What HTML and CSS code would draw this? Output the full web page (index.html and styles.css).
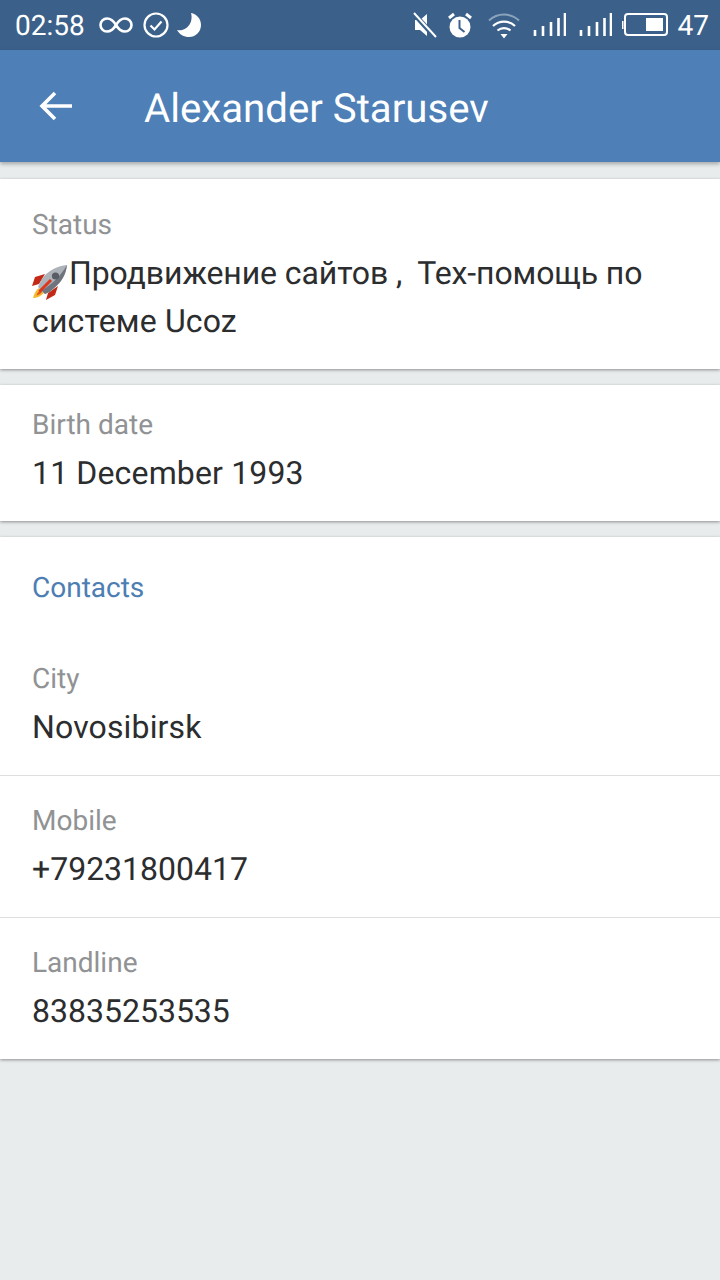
FILE: index.html
```html
<!DOCTYPE html>
<html lang="en">
<head>
<meta charset="utf-8">
<title>Alexander Starusev</title>
<link rel="stylesheet" href="styles.css">
</head>
<body>
<div class="statusbar">
  <div class="sb-left">
    <span class="time">02:58</span>
    <svg class="ic-inf" width="34" height="20" viewBox="0 0 34 20"><path d="M17 10C14 5 11 3.500 8 3.500a6.500 6.500 0 0 0 0 13c3 0 6-1.500 9-6.500c3-5 6-6.500 9-6.500a6.500 6.500 0 0 1 0 13c-3 0-6-1.500-9-6.500z" fill="none" stroke="#fff" stroke-width="2.600"/></svg>
    <svg class="ic-check" width="26" height="26" viewBox="0 0 26 26"><circle cx="13" cy="13" r="11.500" fill="none" stroke="#fff" stroke-width="2.200"/><path d="M7.500 13.500l4 4 7-8" fill="none" stroke="#fff" stroke-width="2.200"/></svg>
    <svg class="ic-moon" width="26" height="26" viewBox="0 0 26 26"><path d="M15 1c6 1 10 6 10 12a12 12 0 0 1-12 12C8 25 3.500 22.500 1 18c8 2 17-6 14-17z" fill="#fff"/></svg>
  </div>
  <div class="sb-right">
    <svg width="24" height="26" viewBox="0 0 24 26"><path d="M2 8h5l7-6v22l-7-6H2z" fill="#fff"/><path d="M1 2l21 23" stroke="#3b618a" stroke-width="5"/><path d="M1 1l22 24" stroke="#fff" stroke-width="2"/></svg>
    <svg class="ic-alarm" width="26" height="26" viewBox="0 0 26 26"><circle cx="13" cy="15" r="10.500" fill="#fff"/><path d="M2 6l5-4M24 6l-5-4" stroke="#fff" stroke-width="3"/><path d="M12.500 8v8l5 4" fill="none" stroke="#3b618a" stroke-width="2"/></svg>
    <svg class="ic-wifi" width="32" height="28" viewBox="0 0 32 28"><path d="M1 9.500a22 22 0 0 1 30 0" fill="none" stroke="#8ba3bc" stroke-width="2"/><path d="M5 15a16 16 0 0 1 22 0M9.500 19.500a10 10 0 0 1 13 0" fill="none" stroke="#fff" stroke-width="2.200"/><path d="M12.500 23h7L16 27.500z" fill="#fff"/></svg>
    <svg class="ic-sig" width="33" height="26" viewBox="0 0 33 26"><path d="M2 24v-6M10 24v-10M18 24v-14M25.500 24V6M32 24V1" stroke="#fff" stroke-width="2.600"/></svg>
    <svg class="ic-sig2" width="33" height="26" viewBox="0 0 33 26"><path d="M2 24v-6M10 24v-10M18 24v-14M25.500 24V6M32 24V1" stroke="#fff" stroke-width="2.600"/></svg>
    <svg class="ic-batt" width="46" height="24" viewBox="0 0 46 24"><rect x="3" y="1" width="42" height="21" rx="3" fill="none" stroke="#fff" stroke-width="2"/><rect x="0" y="8" width="1.500" height="8" fill="#fff"/><rect x="24" y="5" width="17" height="13" fill="#fff"/></svg>
    <span class="level">47</span>
  </div>
</div>
<header class="appbar">
  <svg class="back" width="34" height="30" viewBox="0 0 34 30"><path d="M33 15H3M16 2L3 15l13 13" fill="none" stroke="#fff" stroke-width="3.600"/></svg>
  <h1 class="title">Alexander Starusev</h1>
</header>
<main class="content">
  <section class="card card-status">
    <div class="label">Status</div>
    <div class="value">
      <div class="cyr"><svg class="rocket" width="36" height="36" viewBox="0 0 36 36"><path d="M13 10L3 13 0 22l7-2zM26 22l-3 9-9 5 2-7z" fill="#c22a17"/><path d="M7 24C4 26 2 30 1 34c4 0 8-2 11-5z" fill="#f1bb2e"/><path d="M8.500 26C6.500 27.500 5 29.500 4.500 31.500 6.500 31 8.500 30 10 28z" fill="#e8501f"/><path d="M35 1C26 2 16 6 10 15c-2 3-3 6-4 8l7 7c3-1 6-3 8-5C30 18 34 10 35 1z" fill="#aeb2b9"/><path d="M35 1C30 10 21 20 9.500 26.500L13 30c3-1 6-3 8-5C30 18 34 10 35 1z" fill="#6f747d"/><path d="M7.500 27.500L19 16" stroke="#d9391e" stroke-width="3"/><circle cx="23.500" cy="12" r="3.600" fill="#585d65"/></svg>Продвижение сайтов ,&nbsp; Тех-помощь по</div>
      <div class="wide">системе Ucoz</div>
    </div>
  </section>
  <section class="card card-birth">
    <div class="label">Birth date</div>
    <div class="value latin">11 December 1993</div>
  </section>
  <section class="card card-contacts">
    <div class="heading">Contacts</div>
    <div class="row row-city">
      <div class="label">City</div>
      <div class="value latin">Novosibirsk</div>
    </div>
    <div class="row">
      <div class="label">Mobile</div>
      <div class="value">+79231800417</div>
    </div>
    <div class="row">
      <div class="label">Landline</div>
      <div class="value">83835253535</div>
    </div>
  </section>
</main>
</body>
</html>
```

FILE: styles.css
```css
* { box-sizing: border-box; }
html, body { margin: 0; padding: 0; }
body {
  width: 720px;
  height: 1280px;
  overflow: hidden;
  background: #e9eced;
  font-family: Roboto, "Noto Sans", sans-serif;
  color: #2c2d2e;
  text-rendering: geometricPrecision;
}
.statusbar {
  height: 50px;
  background: #3b618a;
  display: flex;
  justify-content: space-between;
  align-items: center;
  padding: 0 11px 0 15px;
  color: #fff;
}
.sb-left, .sb-right { display: flex; align-items: center; }
.time { font-size: 28px; margin-right: 14px; }
.ic-check { margin-left: 10px; }
.ic-moon { margin-left: 7px; }
.ic-alarm { margin-left: 10px; }
.ic-wifi { margin-left: 15px; }
.ic-sig { margin-left: 13px; }
.ic-sig2 { margin-left: 13px; }
.ic-batt { margin-left: 10px; }
.level { font-size: 28px; margin-left: 10px; }
.appbar {
  height: 112px;
  background: #4e7fb7;
  display: flex;
  align-items: center;
  padding-left: 39px;
  box-shadow: 0 2px 4px rgba(0, 0, 0, 0.3);
  position: relative;
}
.back { flex: none; }
.title {
  margin: 5px 0 0 71px;
  font-size: 40.2px;
  font-weight: 400;
  color: #fff;
}
.content {
  padding-top: 17px;
  display: flex;
  flex-direction: column;
  gap: 16px;
}
.card {
  background: #fff;
  padding: 27px 32px 24px;
  box-shadow: 0 1px 3px rgba(0, 0, 0, 0.4);
}
.card-birth { padding-top: 21px; }
.label {
  font-size: 28px;
  line-height: 38px;
  color: #909294;
}
.value {
  font-size: 32px;
  line-height: 48px;
  margin-top: 5px;
}
.cyr { letter-spacing: -0.1px; }
.latin { letter-spacing: 0.15px; }
.wide { letter-spacing: 0.15px; }
.rocket {
  vertical-align: -10px;
  margin-right: 1px;
  margin-bottom: -6px;
  margin-top: -6px;
}
.card-contacts { padding: 0; }
.heading {
  font-size: 28px;
  line-height: 38px;
  color: #4d7eb3;
  padding: 32px 32px 0;
}
.row {
  padding: 26px 32px 24px;
  border-top: 1px solid #dcdee0;
}
.row-city { border-top: 0; padding-top: 53px; }
```
